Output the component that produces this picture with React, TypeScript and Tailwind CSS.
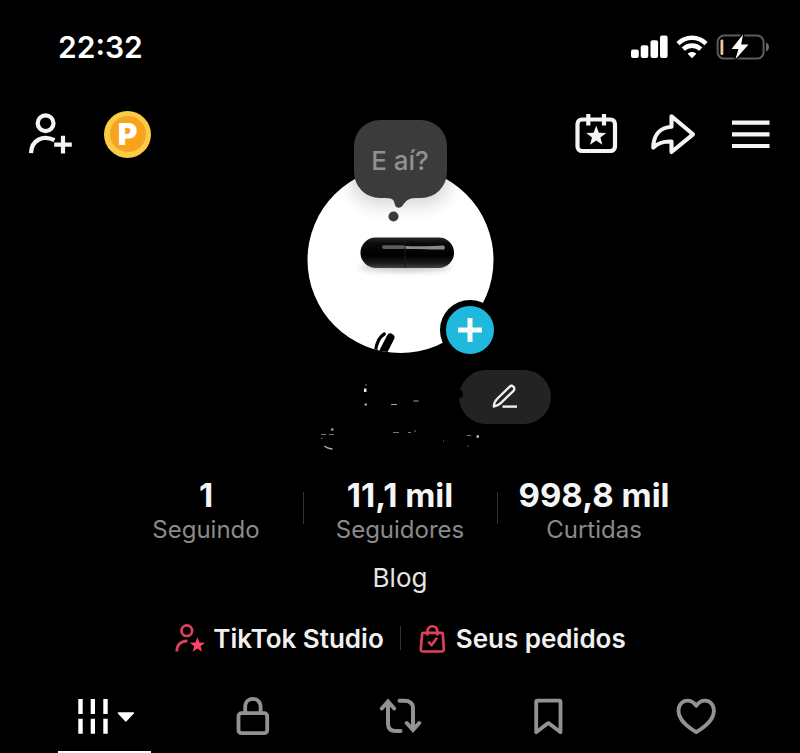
import React from 'react';

const STAR = 'M0-10 2.5-3.4 9.5-3.1 4 1.3 5.9 8.1 0 4.2-5.9 8.1-4 1.3-9.5-3.1-2.5-3.4Z';

const stats = [
  { value: '1', label: 'Seguindo' },
  { value: '11,1 mil', label: 'Seguidores' },
  { value: '998,8 mil', label: 'Curtidas' },
];

const StatusBar: React.FC = () => (
  <div className="flex h-[94px] items-center justify-between px-[30px] pl-[58px]">
    <span className="text-[30px] font-semibold">22:32</span>
    <div className="flex items-center gap-2">
      <svg width="38" height="26" viewBox="0 0 38 26" fill="#fff">
        <rect x="1" y="15.5" width="7.8" height="8.5" rx="2" />
        <rect x="10.700" y="11.2" width="7.6" height="12.8" rx="2" />
        <rect x="20.500" y="6.2" width="7.6" height="17.8" rx="2" />
        <rect x="30" y="1.5" width="7.6" height="22.5" rx="2" />
      </svg>
      <svg width="32" height="26" viewBox="0 0 32 26" fill="none" stroke="#fff" strokeWidth="4.6">
        <path d="M2 9.6C9.6 1.8 22.4 1.8 30 9.6" />
        <path d="M7.3 15.2c4.9-4.8 12.5-4.8 17.4 0" />
        <path d="M16 24.2 11.6 19.7c2.4-2.2 6.4-2.2 8.8 0Z" fill="#fff" stroke="none" />
      </svg>
      <svg width="54" height="26" viewBox="0 0 54 26" fill="none">
        <rect x="1.6" y="1.6" width="46" height="23" rx="6.5" stroke="#5c5c5c" strokeWidth="2" />
        <path d="M50 8.5c4 1.5 4 7.5 0 9Z" fill="#6b6b6b" />
        <rect x="4.5" y="5.5" width="2.8" height="15.5" rx="1.2" fill="#e9c7a0" />
        <path d="M27 0.500 15.500 15h7l-3.200 10.500L32.500 10.500h-7.300Z" fill="#fff" stroke="#000" strokeWidth="3" paintOrder="stroke" />
      </svg>
    </div>
  </div>
);

const TopBar: React.FC = () => (
  <header className="flex h-20 items-center justify-between px-7">
    <div className="flex items-center gap-8">
      <button aria-label="Adicionar amigos">
        <svg width="44" height="44" viewBox="0 0 44 44" fill="none" stroke="#f4f4f4" strokeWidth="4.2">
          <circle cx="17.6" cy="11.2" r="7.900" />
          <path d="M3 41.200C3.500 27.500 15.500 22.700 26.500 28.200M35 23.800v17.700M26.200 32.6h17.600" />
        </svg>
      </button>
      <button className="flex size-[47px] items-center justify-center rounded-full bg-[#fccb44]">
        <span className="flex size-9 items-center justify-center rounded-full border-2 border-[#f0a52c] bg-[#f9a31b] text-[30px] leading-none font-black">P</span>
      </button>
    </div>
    <div className="flex items-center gap-8">
      <button aria-label="Eventos">
        <svg width="44" height="44" viewBox="0 0 44 44" fill="none" stroke="#f4f4f4" strokeWidth="4.2">
          <rect x="5" y="7.5" width="37.500" height="31.500" rx="4.5" transform="translate(-1.500 0)" />
          <path d="M14.300 2v11.500M30 2v11.500" />
          <path d={STAR} transform="translate(22.200 24.2) scale(1.050)" fill="#f4f4f4" stroke="none" />
        </svg>
      </button>
      <button aria-label="Compartilhar">
        <svg width="46" height="44" viewBox="0 0 46 44" fill="none" stroke="#f4f4f4" strokeWidth="4.1" strokeLinejoin="round">
          <path d="M21.500 4.200 43 22.300 21.500 40V29.500C13 29 8 31 3.300 35.500 3.500 23 10 15.500 21.500 14.800Z" />
        </svg>
      </button>
      <button aria-label="Menu">
        <svg width="44" height="44" viewBox="0 0 44 44" stroke="#f4f4f4" strokeWidth="4.2" strokeLinecap="butt">
          <path d="M4 10.600h37.500M4 22.300h37.500M4 34h37.500" />
        </svg>
      </button>
    </div>
  </header>
);

const Avatar: React.FC = () => (
  <div className="relative mx-auto -mt-[7px] size-[187px]">
    <svg width="187" height="187" viewBox="0 0 187 187">
      <defs>
        <clipPath id="face">
          <circle cx="93.5" cy="93" r="93" />
        </clipPath>
        <linearGradient id="capsule" x2="0" y2="1">
          <stop offset="0" stopColor="#262626" />
          <stop offset="0.2" stopColor="#0a0a0a" />
          <stop offset="0.6" stopColor="#000" />
          <stop offset="0.85" stopColor="#1c1c1c" />
          <stop offset="1" stopColor="#444" />
        </linearGradient>
        <filter id="soft" x="-30%" y="-100%" width="160%" height="300%">
          <feGaussianBlur stdDeviation="3" />
        </filter>
        <filter id="wide" x="-50%" y="-50%" width="200%" height="200%">
          <feGaussianBlur stdDeviation="9" />
        </filter>
      </defs>
      <g clipPath="url(#face)">
        <rect width="187" height="187" fill="#fff" />
        <rect x="44" y="-40" width="99" height="78" rx="26" fill="#000" opacity="0.16" filter="url(#wide)" />
        <ellipse cx="98" cy="100" rx="46" ry="4" fill="#000" opacity="0.25" filter="url(#soft)" />
        <rect x="53.5" y="70.5" width="93.5" height="30.5" rx="15.2" fill="url(#capsule)" />
        <rect x="75" y="78.3" width="23" height="3.6" rx="1.8" fill="#5c5c5c" />
        <path d="M97 79c18 .6 30 0 40-.5q1.500 2 0 4c-11 0-26-.2-40-.8Z" fill="#8a8a8a" />
        <path d="M98 71v30" stroke="#1a1a1a" />
        <path d="M83.5 170.5 74 189" stroke="#000" strokeWidth="8" strokeLinecap="round" />
        <path d="M77.3 167C72 170 69.5 176 68.5 184" fill="none" stroke="#000" strokeWidth="3.2" strokeLinecap="round" />
      </g>
    </svg>
    <div className="absolute -top-[47px] left-[47px] flex h-[78px] w-[93px] items-center justify-center rounded-[26px] bg-[#3b3b3b] pt-0.5 text-[26px] font-medium text-[#919191]">
      E aí?
      <svg className="absolute top-[77px] left-8" width="30" height="26" viewBox="0 0 30 26" fill="#3b3b3b">
        <path d="M0 0h30v1C22 1 20 4 17 8c-2 3.500-7 3.500-8 0C8 4 8 1 0 1Z" />
        <circle cx="7.5" cy="19.5" r="5" />
      </svg>
    </div>
    <button aria-label="Adicionar" className="absolute -right-[6px] -bottom-[6px] flex size-[60px] items-center justify-center rounded-full border-[6px] border-black bg-[#20b9de]">
      <svg width="26" height="26" viewBox="0 0 26 26" stroke="#fff" strokeWidth="5">
        <path d="M13 1v24M1 13h24" />
      </svg>
    </button>
  </div>
);

const NameRow: React.FC = () => (
  <>
    <div className="mt-4 flex justify-center">
      <svg width="210" height="54" viewBox="0 0 210 54" stroke="#aaa" fill="none">
        <path d="M117 14v2" stroke="#777" />
        <path d="M116.2 18.5v3.5" stroke="#eee" strokeWidth="2.5" />
        <path d="M115.5 34.5h2.5" strokeWidth="2" />
        <path d="M142 34.5h6M164.5 31h5" />
      </svg>
      <button aria-label="Editar perfil" className="relative flex h-[54px] w-[92px] items-center justify-center rounded-full bg-[#232323]">
        <svg width="28" height="28" viewBox="0 0 28 28" fill="none" stroke="#eee" strokeWidth="2.4" strokeLinejoin="round">
          <path d="M2.800 23.5C3 20.500 4 18 6 16L18.500 3.800c1.200-1.200 2.900-1 4 0s1.200 2.800 0 4L10 19.800C8 21.800 6 23 2.800 23.500Z" />
          <path d="M11.500 23.600h14.500" />
        </svg>
        <span className="absolute top-5 left-0 h-2 w-1 rounded-r bg-black" />
      </button>
    </div>
    <svg className="mx-auto" width="170" height="28" viewBox="0 0 170 28" stroke="#777" fill="none">
      <path d="M16 5.5h2.5" stroke="#aaa" strokeWidth="2" />
      <path d="M6 10.5h5M14 10.5h5M6 14.5h1.5" />
      <path d="M9.5 22c2 2 4.5 2.500 8 3" stroke="#aaa" strokeWidth="1.5" />
      <path d="M78 8.5h6M93 8.5h3M99 7h2M128 17h1M152 11.5h4M152.5 22h1.500" />
      <path d="M161.5 12.5h2.500" stroke="#bbb" strokeWidth="2.5" />
    </svg>
  </>
);

const Stats: React.FC = () => (
  <div className="mx-auto mt-6 grid max-w-[582px] grid-cols-3">
    {stats.map((s, i) => (
      <div key={s.label} className="relative text-center">
        <div className="text-[33px] leading-[38px] font-bold text-[#f5f5f5]">{s.value}</div>
        <div className="text-2xl leading-8 text-[#8a8a8a]">{s.label}</div>
        {i > 0 && <span className="absolute top-4 left-0 h-8 w-px bg-[#333]" />}
      </div>
    ))}
  </div>
);

const Links: React.FC = () => (
  <div className="mt-7 flex h-8 items-center justify-center text-[26px] font-semibold text-[#f0f0f0]">
    <a href="#studio" className="flex items-center gap-[7px]">
      <svg width="32" height="32" viewBox="0 0 32 32" fill="none" stroke="#e2405f" strokeWidth="2.7">
        <circle cx="12.8" cy="8.7" r="5.3" />
        <path d="M2.800 29.500C2.800 23 6.500 19.200 13.500 18.900" />
        <path d={STAR} transform="translate(23.4 23.2) scale(.8)" fill="#fb4467" stroke="none" />
      </svg>
      TikTok Studio
    </a>
    <span className="mx-4 h-6 w-px bg-[#333]" />
    <a href="#pedidos" className="flex items-center gap-[7px]">
      <svg width="32" height="32" viewBox="0 0 32 32" fill="none" stroke="#dd3f5c" strokeWidth="2.7" strokeLinejoin="round">
        <path d="M6.5 10.8h18c.8 0 1.200.5 1.300 1.200l1 15.200c.1 1.500-.8 2.300-2 2.300H5.800c-1.300 0-2.200-.8-2-2.300l1.300-15.200c.1-.7.6-1.200 1.400-1.200Z" />
        <path d="M10.500 13.500V9.500c0-7 9.800-7 9.800 0v4M11.300 19.700l3.200 3.500 5.500-7.500" />
      </svg>
      Seus pedidos
    </a>
  </div>
);

const Tabs: React.FC = () => (
  <nav className="mt-7 grid grid-cols-5 px-[30px]">
    <button aria-label="Vídeos" className="mx-auto flex h-[71px] w-[93px] items-center justify-center border-b-2 border-white pb-px">
      <svg width="60" height="40" viewBox="0 0 60 40" fill="#fff">
        <path d="M4.3 3h4.400v15H4.300zM16.700 3H21v15h-4.300zM29.300 3h4.400v15h-4.400zM4.300 22.700h4.400v15H4.300zM16.700 22.700H21v15h-4.300zM29.300 22.700h4.400v15h-4.400z" />
        <path d="M44.500 16.300h14.800c.9 0 1 .7.500 1.200l-7 7.600c-.6.700-1.300.7-1.900 0l-7-7.600c-.5-.6-.2-1.200.6-1.200Z" />
      </svg>
    </button>
    <button aria-label="Privado" className="mx-auto flex h-[68px] items-center">
      <svg width="40" height="40" viewBox="0 0 40 40" fill="none" stroke="#929292" strokeWidth="3.8">
        <rect x="6.5" y="17.2" width="28.7" height="20" rx="3" />
        <path d="M13.2 17.400V10.800c0-10.600 15.400-10.600 15.400 0v6.600" />
      </svg>
    </button>
    <button aria-label="Republicações" className="mx-auto flex h-[68px] items-center">
      <svg width="44" height="40" viewBox="0 0 44 40" fill="none" stroke="#929292" strokeWidth="4" strokeLinecap="round">
        <path d="M10 6v21.500c0 5 3 7.500 8 7.500h4.500M3.800 12.500 10 5.500 16.200 12.500" />
        <path d="M21.500 4.700h5c5 0 8.500 2.500 8.500 7.500V33M28.800 27 35 34l6.200-7" />
      </svg>
    </button>
    <button aria-label="Favoritos" className="mx-auto flex h-[68px] items-center">
      <svg width="40" height="40" viewBox="0 0 40 40" fill="none" stroke="#929292" strokeWidth="3.8" strokeLinejoin="round">
        <path d="M8.200 6c0-.8.5-1.300 1.300-1.300h21.700c.8 0 1.300.5 1.300 1.300v30.200L21.500 27.800c-.7-.6-1.600-.6-2.300 0L8.200 36.200Z" />
      </svg>
    </button>
    <button aria-label="Curtidos" className="mx-auto flex h-[68px] items-center">
      <svg width="44" height="40" viewBox="0 0 44 40" fill="none" stroke="#929292" strokeWidth="3.8" strokeLinejoin="round">
        <path d="M22.200 9.800C19.500 6 16.500 4.700 13.500 4.700 8.300 4.700 4.500 9 4.500 14.500c0 9.500 8.500 16 17.700 21.700C31.500 30.500 39.900 24 39.900 14.500c0-5.500-3.800-9.800-9-9.800-3 0-6 1.300-8.700 5.100Z" />
      </svg>
    </button>
  </nav>
);

export default function App() {
  return (
    <main className="min-h-screen overflow-hidden bg-black font-['Inter',sans-serif] text-white">
      <StatusBar />
      <TopBar />
      <Avatar />
      <NameRow />
      <Stats />
      <p className="mt-4 text-center text-[26px] leading-8 text-[#e4e4e4]">Blog</p>
      <Links />
      <Tabs />
    </main>
  );
}
